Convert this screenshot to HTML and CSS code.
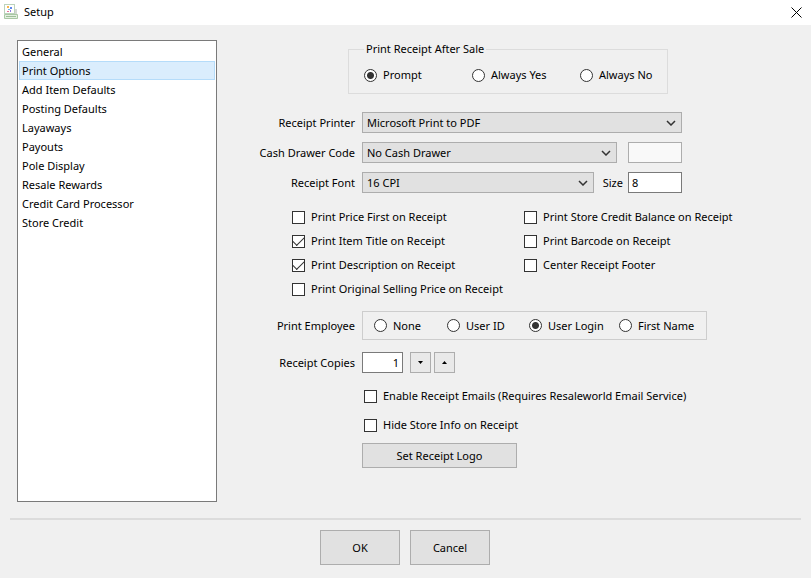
FILE: index.html
```html
<!DOCTYPE html>
<html lang="en">
<head>
  <meta charset="UTF-8" />
  <meta name="viewport" content="width=device-width, initial-scale=1.0" />
  <title>Setup</title>
  <link rel="stylesheet" href="styles.css">
</head>
<body>
  <header class="titlebar">
    <svg class="app-icon" width="16" height="16" viewBox="0 0 16 16" aria-hidden="true">
      <rect x="1.5" y="0.5" width="10" height="9" fill="#fff" stroke="#bcd3bc" />
      <path d="M4 2h2v2H4z" fill="#f5b84f" />
      <path d="M7 3h2v2H7z" fill="#5f86ea" />
      <path d="M5 5h2v1H5z" fill="#6fb8e8" />
      <path d="M4 7h2v1H4z" fill="#e8709a" />
      <path d="M7 6h1v2H7z" fill="#8a7be0" />
      <path d="M12 5h2v5h-2z" fill="#d3d8d3" />
      <path d="M1.500 10.500h13v4h-13z" fill="#e3efe0" stroke="#a9c8a4" />
      <path d="M3 12.500h10" stroke="#9dbf98" />
    </svg>
    <h1>Setup</h1>
    <button class="close" type="button" aria-label="Close">
      <svg width="11" height="11" viewBox="0 0 11 11"><path d="M0.500 0.500l10 10M10.500 0.500l-10 10" stroke="#000" fill="none" /></svg>
    </button>
  </header>

  <main class="content">
    <ul class="sections">
      <li><button type="button">General</button></li>
      <li><button type="button" class="selected">Print Options</button></li>
      <li><button type="button">Add Item Defaults</button></li>
      <li><button type="button">Posting Defaults</button></li>
      <li><button type="button">Layaways</button></li>
      <li><button type="button">Payouts</button></li>
      <li><button type="button">Pole Display</button></li>
      <li><button type="button">Resale Rewards</button></li>
      <li><button type="button">Credit Card Processor</button></li>
      <li><button type="button">Store Credit</button></li>
    </ul>

    <form class="options" id="options">
      <fieldset class="after-sale">
        <legend>Print Receipt After Sale</legend>
        <div class="after-sale-choices">
          <label class="choice"><input type="radio" name="after" checked>Prompt</label>
          <label class="choice"><input type="radio" name="after">Always Yes</label>
          <label class="choice"><input type="radio" name="after">Always No</label>
        </div>
      </fieldset>

      <div class="fields">
        <label class="name" for="printer">Receipt Printer</label>
        <div class="line">
          <span class="combo">
            <select id="printer"><option>Microsoft Print to PDF</option></select>
            <svg width="10" height="6" viewBox="0 0 10 6"><path d="M1 1l4 4 4-4" /></svg>
          </span>
        </div>

        <label class="name" for="drawer">Cash Drawer Code</label>
        <div class="line drawer-line">
          <span class="combo">
            <select id="drawer"><option>No Cash Drawer</option></select>
            <svg width="10" height="6" viewBox="0 0 10 6"><path d="M1 1l4 4 4-4" /></svg>
          </span>
          <input class="box short" type="text" aria-label="Custom drawer code" disabled>
        </div>

        <label class="name" for="font">Receipt Font</label>
        <div class="line font-line">
          <span class="combo">
            <select id="font"><option>16 CPI</option></select>
            <svg width="10" height="6" viewBox="0 0 10 6"><path d="M1 1l4 4 4-4" /></svg>
          </span>
          <label for="size">Size</label>
          <input class="box short" type="text" id="size" value="8">
        </div>
      </div>

      <div class="checks">
        <div>
          <label class="choice"><input type="checkbox">Print Price First on Receipt</label>
          <label class="choice"><input type="checkbox" checked>Print Item Title on Receipt</label>
          <label class="choice"><input type="checkbox" checked>Print Description on Receipt</label>
          <label class="choice"><input type="checkbox">Print Original Selling Price on Receipt</label>
        </div>
        <div>
          <label class="choice"><input type="checkbox">Print Store Credit Balance on Receipt</label>
          <label class="choice"><input type="checkbox">Print Barcode on Receipt</label>
          <label class="choice"><input type="checkbox">Center Receipt Footer</label>
        </div>
      </div>

      <div class="fields lower">
        <span class="name" id="employee-name">Print Employee</span>
        <div class="employee" role="radiogroup" aria-labelledby="employee-name">
          <label class="choice"><input type="radio" name="employee">None</label>
          <label class="choice"><input type="radio" name="employee">User ID</label>
          <label class="choice"><input type="radio" name="employee" checked>User Login</label>
          <label class="choice"><input type="radio" name="employee">First Name</label>
        </div>

        <label class="name" for="copies">Receipt Copies</label>
        <div class="copies">
          <input class="box" type="text" id="copies" value="1">
          <button class="step" type="button" aria-label="Fewer copies">
            <svg width="5" height="3" viewBox="0 0 5 3"><path d="M0 0h5L2.500 3z" /></svg>
          </button>
          <button class="step" type="button" aria-label="More copies">
            <svg width="5" height="3" viewBox="0 0 5 3"><path d="M0 3h5L2.500 0z" /></svg>
          </button>
        </div>
      </div>

      <div class="extras">
        <label class="choice"><input type="checkbox">Enable Receipt Emails (Requires Resaleworld Email Service)</label>
        <label class="choice"><input type="checkbox">Hide Store Info on Receipt</label>
      </div>
      <button class="btn logo-btn" type="button">Set Receipt Logo</button>
    </form>
  </main>

  <footer class="actions">
    <button class="btn" type="submit" form="options">OK</button>
    <button class="btn" type="button">Cancel</button>
  </footer>
</body>
</html>
```
FILE: styles.css
```css
* {
  box-sizing: border-box;
}
body {
  margin: 0;
  min-height: 100vh;
  display: flex;
  flex-direction: column;
  background: #f0f0f0;
  color: #000;
  font-family: "Noto Sans", "Open Sans", sans-serif;
  font-size: 11px;
  line-height: 18px;
}
button, input, select {
  font: inherit;
  color: inherit;
  margin: 0;
}

/* title bar */
.titlebar {
  display: flex;
  align-items: center;
  height: 25px;
  padding: 0 9px 1px 3px;
  background: #fff;
}
.titlebar h1 {
  flex: 1;
  margin: 0 0 0 5px;
  font-size: 11px;
  font-weight: normal;
}
.close {
  display: flex;
  padding: 0;
  border: none;
  background: none;
}

.content {
  flex: 1;
  display: flex;
  padding: 15px 17px 16px;
}

/* section list */
.sections {
  flex: none;
  width: 200px;
  margin: 0;
  padding: 1px;
  list-style: none;
  background: #fff;
  border: 1px solid #7a7a7a;
}
.sections button {
  display: block;
  width: 100%;
  height: 19px;
  padding: 0 2px;
  border: 1px solid transparent;
  background: none;
  text-align: left;
  line-height: 17px;
}
.sections .selected {
  background: #daedfd;
  border-color: #b5dcfa;
}

.options {
  flex: 1;
}

.choice {
  display: flex;
  align-items: center;
  gap: 6px;
  white-space: nowrap;
}
.choice input {
  appearance: none;
  flex: none;
  width: 13px;
  height: 13px;
  background: #fff;
  border: 1px solid #333;
}
.choice input[type="radio"] {
  border-radius: 50%;
}
.choice input[type="radio"]:checked {
  background: radial-gradient(circle, #333 3px, #fff 4px);
}
.choice input[type="checkbox"]:checked::after {
  content: "";
  display: block;
  width: 10px;
  height: 5px;
  margin: 1px 0;
  border: solid #333;
  border-width: 0 0 1px 1px;
  transform: rotate(-45deg);
}

.after-sale {
  min-width: 0;
  max-width: 320px;
  margin: 0 0 18px 131px;
  padding: 8px 12px 9px 15px;
  border: 1px solid #dcdcdc;
}
.after-sale legend {
  padding: 0 2px;
}
.after-sale-choices {
  display: grid;
  grid-template-columns: 108px 108px 1fr;
}

/* label column and control column */
.fields {
  display: grid;
  grid-template-columns: 138px 1fr;
  column-gap: 7px;
  row-gap: 9px;
  align-items: center;
}
.name {
  text-align: right;
}
.line {
  display: flex;
  align-items: center;
  max-width: 320px;
}
.drawer-line {
  gap: 11px;
}
.font-line {
  gap: 5px;
}
.font-line .combo {
  margin-right: 4px;
}
.combo {
  position: relative;
  flex: 1;
  display: flex;
}
.combo select {
  appearance: none;
  width: 100%;
  height: 21px;
  padding: 0 20px 0 4px;
  background: #e1e1e1;
  border: 1px solid #adadad;
  border-radius: 0;
}
.combo svg {
  position: absolute;
  right: 6px;
  top: 8px;
  fill: none;
  stroke: #333;
  stroke-width: 1.5;
  pointer-events: none;
}
.box {
  height: 21px;
  padding: 0 3px;
  background: #fff;
  border: 1px solid #7a7a7a;
}
.box:disabled {
  background: #f9f9f9;
  border-color: #adadad;
}
.short {
  width: 54px;
}

.checks {
  display: grid;
  grid-template-columns: 232px 1fr;
  margin: 12px 0 10px 75px;
}
.checks .choice {
  height: 24px;
}

.lower {
  row-gap: 12px;
}
.employee {
  display: grid;
  grid-template-columns: 73px 82px 90px 1fr;
  align-items: center;
  max-width: 345px;
  height: 29px;
  padding: 0 11px;
  border: 1px solid #cdcdcd;
}
.copies {
  display: flex;
  gap: 3px;
}
.copies .box {
  width: 41px;
  margin-right: 4px;
  text-align: right;
}
.step {
  display: flex;
  align-items: center;
  justify-content: center;
  width: 21px;
  height: 21px;
  padding: 0;
  background: #e9e9e9;
  border: 1px solid #adadad;
}

.extras {
  display: grid;
  gap: 11px;
  margin: 14px 0 9px 147px;
}

.btn {
  background: #e1e1e1;
  border: 1px solid #adadad;
}
.logo-btn {
  width: 155px;
  height: 25px;
  margin-left: 145px;
  padding: 0;
}

.actions {
  display: flex;
  justify-content: center;
  gap: 10px;
  margin: 0 10px;
  padding: 10px 1px 13px 0;
  border-top: 2px solid #dcdcdc;
}
.actions .btn {
  width: 80px;
  height: 35px;
}
```
